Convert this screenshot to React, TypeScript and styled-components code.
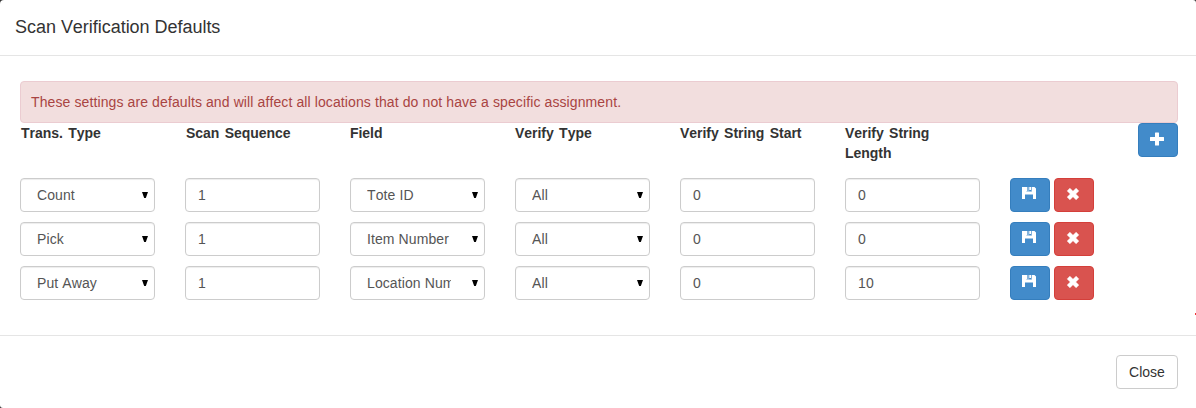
import React from "react";
import styled, { createGlobalStyle } from "styled-components";

const GlobalStyle = createGlobalStyle`
  * { box-sizing: border-box; }
  body {
    margin: 0;
    background: #333;
    color: #333;
    font: 14px/20px "Liberation Sans", Arial, sans-serif;
    font-kerning: none;
  }
`;

const Modal = styled.div`
  position: relative;
  height: 408px;
  display: flex;
  flex-direction: column;
  background: #fff;
  border-radius: 4px 3px 0 3px;
`;

const EdgeMark = styled.i`
  position: absolute;
  right: 0;
  top: 313px;
  width: 1px;
  height: 2px;
  background: #e33;
`;

const Header = styled.header`
  height: 56px;
  padding: 15px;
  border-bottom: 1px solid #e5e5e5;
`;

const Title = styled.h4`
  margin: 0;
  font-size: 18px;
  font-weight: 400;
  line-height: 24px;
  letter-spacing: -0.03px;
`;

const Body = styled.main`
  flex: 1;
  padding: 25px 18px 0 20px;
`;

const Alert = styled.div`
  height: 42px;
  padding: 10px;
  border: 1px solid #ebccd1;
  border-radius: 4px;
  background: #f2dede;
  color: #a94442;
  letter-spacing: 0.107px;
`;

const Columns = styled.div`
  display: grid;
  grid-template-columns: repeat(6, 135px) 1fr;
  column-gap: 30px;
`;

const HeadRow = styled(Columns)`
  height: 55px;
  align-items: start;
`;

const Label = styled.strong<{ $inset?: number }>`
  padding-left: ${(p) => p.$inset ?? 0}px;
  letter-spacing: -0.04px;
  word-spacing: 1.6px;
  white-space: nowrap;
`;

const Row = styled(Columns)`
  height: 34px;
  margin-bottom: 10px;
`;

const Control = styled.div`
  height: 34px;
  display: flex;
  align-items: center;
  padding: 0 6px 0 12px;
  border: 1px solid #ccc;
  border-radius: 4px;
  box-shadow: inset 0 1px 1px rgba(0, 0, 0, 0.075);
  color: #555;
  letter-spacing: 0.1px;
`;

const Choice = styled(Control)`
  justify-content: space-between;
  padding-left: 16px;
`;

const ChoiceText = styled.span`
  width: 84px;
  overflow: hidden;
  white-space: nowrap;
`;

const Actions = styled.div`
  display: flex;
  gap: 4px;
`;

const tones = {
  primary: ["#428bca", "#357ebd", "#fff"],
  danger: ["#d9534f", "#d43f3a", "#fff"],
  plain: ["#fff", "#ccc", "#333"],
};

const Button = styled.button<{ $tone: keyof typeof tones; $width?: number }>`
  width: ${(p) => p.$width ?? 40}px;
  height: 34px;
  display: flex;
  align-items: center;
  justify-content: center;
  padding: 0;
  border: 1px solid ${(p) => tones[p.$tone][1]};
  border-radius: 4px;
  background: ${(p) => tones[p.$tone][0]};
  color: ${(p) => tones[p.$tone][2]};
  font: inherit;
  font-kerning: none;
`;

const AddButton = styled(Button)`
  justify-self: end;
`;

const Icon = styled.svg<{ $lift?: number; $shift?: number }>`
  display: block;
  margin-bottom: ${(p) => p.$lift ?? 0}px;
  margin-right: ${(p) => p.$shift ?? 0}px;
  fill: currentColor;
`;

const Footer = styled.footer`
  height: 73px;
  display: flex;
  justify-content: flex-end;
  padding: 19px 18px 0;
  border-top: 1px solid #e5e5e5;
`;

const Plus = () => (
  <Icon width="14" height="14" viewBox="0 0 14 14" $lift={2} $shift={2}>
    <path d="M5 1q0-.5.5-.5h3q.5 0 .5.5v4h4.500q.5 0 .5.5v3q0 .5-.5.5H9v4q0 .5-.5.5h-3q-.5 0-.5-.5V9H.5Q0 9 0 8.500v-3Q0 5 .5 5H5z" />
  </Icon>
);

const Save = () => (
  <Icon width="14" height="14" viewBox="0 0 14 14" $lift={4} $shift={2}>
    <path d="M0 1h4v4.500h6V1h2.500L14 2.500V13h-3V8.500H3V13H0z" />
    <path d="M4 1h1v4.500H4zM7.300 1H9v3H7.300z" />
    <path opacity=".35" d="M5 1h2.300v4.500H5zM9 1h1v4.500H9z" />
  </Icon>
);

const Remove = () => (
  <Icon width="14" height="14" viewBox="0 0 14 14" $lift={2} $shift={2}>
    <path
      stroke="currentColor"
      strokeWidth=".5"
      strokeLinejoin="round"
      d="M3.900 1.200 7 4.300l3.100-3.100L12.800 3.900 9.700 7l3.100 3.100-2.700 2.700L7 9.700l-3.100 3.100-2.700-2.700L4.300 7 1.200 3.900z"
    />
  </Icon>
);

const Caret = styled.svg`
  display: block;
  fill: #000;
`;

const Arrow = () => (
  <Caret width="6" height="7" viewBox="0 0 6 7">
    <path d="M0 0h6L3.800 6H2.200z" />
  </Caret>
);

const Select = ({ value }: { value: string }) => (
  <Choice>
    <ChoiceText>{value}</ChoiceText>
    <Arrow />
  </Choice>
);

const labels = ["Trans. Type", "Scan Sequence", "Field", "Verify Type", "Verify String Start"];

const rows = [
  { type: "Count", sequence: 1, field: "Tote ID", verify: "All", start: 0, length: 0 },
  { type: "Pick", sequence: 1, field: "Item Number", verify: "All", start: 0, length: 0 },
  { type: "Put Away", sequence: 1, field: "Location Number", verify: "All", start: 0, length: 10 },
];

export default function App() {
  return (
    <>
      <GlobalStyle />
      <Modal>
        <Header>
          <Title>Scan Verification Defaults</Title>
        </Header>
        <Body>
          <Alert>These settings are defaults and will affect all locations that do not have a specific assignment.</Alert>
          <HeadRow>
            {labels.map((label, i) => (
              <Label key={label} $inset={i < 2 ? 1 : 0}>{label}</Label>
            ))}
            <Label>
              Verify String
              <br />
              Length
            </Label>
            <AddButton $tone="primary" aria-label="Add">
              <Plus />
            </AddButton>
          </HeadRow>
          {rows.map((row) => (
            <Row key={row.type}>
              <Select value={row.type} />
              <Control>{row.sequence}</Control>
              <Select value={row.field} />
              <Select value={row.verify} />
              <Control>{row.start}</Control>
              <Control>{row.length}</Control>
              <Actions>
                <Button $tone="primary" aria-label="Save">
                  <Save />
                </Button>
                <Button $tone="danger" aria-label="Remove">
                  <Remove />
                </Button>
              </Actions>
            </Row>
          ))}
        </Body>
        <Footer>
          <Button $tone="plain" $width={62}>Close</Button>
        </Footer>
        <EdgeMark />
      </Modal>
    </>
  );
}
